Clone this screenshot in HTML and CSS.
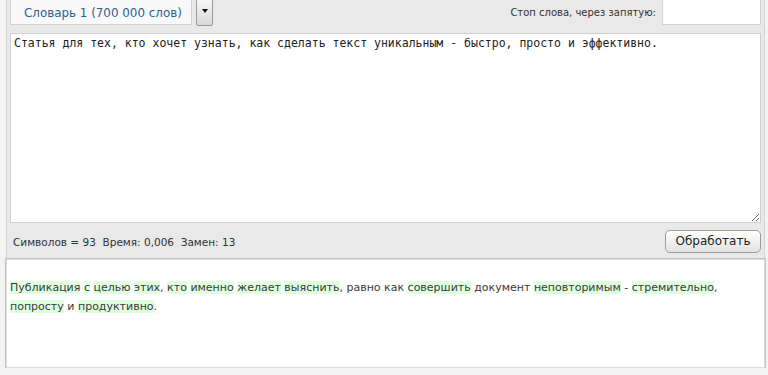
FILE: index.html
```html
<!DOCTYPE html>
<html lang="ru">
<head>
    <meta charset="utf-8">
    <meta name="viewport" content="width=device-width,initial-scale=1.0">
    <title>Синонимайзер</title>
    <link rel="stylesheet" href="styles.css">
</head>
<body>

    <div class="panel">
        <div class="top-bar">
            <div class="dict-select">
                <div class="dict-value">Словарь 1 (700 000 слов)</div>
                <button class="dict-arrow" type="button"><span class="tri"></span></button>
            </div>
            <div class="stop-words">
                <label for="stop">Стоп слова, через запятую:</label>
                <input id="stop" type="text">
            </div>
        </div>

        <textarea class="source" spellcheck="false">Статья для тех, кто хочет узнать, как сделать текст уникальным - быстро, просто и эффективно.</textarea>

        <div class="stats-bar">
            <div class="stats">Символов = 93&nbsp; Время: 0,006&nbsp; Замен: 13</div>
            <button class="run-button" type="button">Обработать</button>
        </div>
    </div>

    <div class="result">
        <p><span class="hl">Публикация</span> <span class="hl">с</span> <span class="hl">целью</span> <span class="hl">этих</span>, <span class="hl">кто</span> <span class="hl">именно</span> <span class="hl">желает</span> <span class="hl">выяснить</span>, равно как <span class="hl">совершить</span> документ <span class="hl">неповторимым</span> - <span class="hl">стремительно</span>, <span class="hl">попросту</span> и <span class="hl">продуктивно</span>.</p>
    </div>

</body>
</html>
```

FILE: styles.css
```css
html {
    background: #f3f3f3;
}

body {
    margin: 0;
    padding-top: 1px;
    font-family: "DejaVu Sans", Verdana, sans-serif;
    color: #333;
    overflow: hidden;
}

.panel {
    margin: -7px 0 0 6px;
    width: 759px;
    box-sizing: border-box;
    background: #e9e9e9;
    border-left: 1px solid #d4d4d4;
    border-right: 1px solid #d4d4d4;
    padding: 0 3px;
}

.top-bar {
    display: flex;
    justify-content: space-between;
    align-items: flex-start;
    height: 39px;
}

.dict-select {
    display: flex;
    gap: 4px;
}

.dict-value {
    width: 182px;
    height: 31px;
    line-height: 36px;
    box-sizing: border-box;
    padding-left: 13px;
    background: #f9f9f9;
    border: 1px solid #d2d2d2;
    color: #2d5f8f;
    font-size: 11.9px;
    white-space: nowrap;
}

.dict-arrow {
    width: 17px;
    height: 32px;
    padding: 0 0 12px 0;
    border: 1px solid #9a9a9a;
    border-radius: 0 0 2px 2px;
    background: linear-gradient(to bottom, #fdfdfd, #d8d8d8);
    display: flex;
    align-items: flex-end;
    justify-content: center;
    box-sizing: border-box;
}

.tri {
    width: 0;
    height: 0;
    border-left: 3px solid transparent;
    border-right: 3px solid transparent;
    border-top: 4px solid #111;
}

.stop-words {
    display: flex;
    align-items: center;
    gap: 6px;
    height: 31px;
}

.stop-words label {
    font-size: 10px;
    color: #333;
    padding-top: 6px;
}

.stop-words input {
    width: 99px;
    height: 31px;
    box-sizing: border-box;
    border: 1px solid #d2d2d2;
    background: #fff;
    margin: 0;
}

.source {
    display: block;
    width: 751px;
    height: 190px;
    box-sizing: border-box;
    margin: 0;
    border: 1px solid #cfcfcf;
    padding: 2px 3px;
    font-family: "DejaVu Sans Mono", monospace;
    font-size: 11.5px;
    line-height: 14px;
    color: #222;
    background: #fff;
    resize: both;
}

.stats-bar {
    display: flex;
    justify-content: space-between;
    align-items: center;
    height: 36px;
}

.stats {
    font-size: 10.5px;
    color: #333;
    padding-left: 3px;
    padding-top: 2px;
}

.run-button {
    width: 96px;
    height: 23px;
    border: 1px solid #9d9d9d;
    border-radius: 5px;
    background: linear-gradient(to bottom, #ffffff, #e2e2e2);
    font-family: "DejaVu Sans", Verdana, sans-serif;
    font-size: 12px;
    color: #222;
    cursor: pointer;
}

.result {
    margin: 0 0 0 6px;
    width: 759px;
    height: 109px;
    box-sizing: border-box;
    background: #fff;
    border: 1px solid #dcdcdc;
    box-shadow: 0 0 0 1px #c4c4c4;
    padding: 18px 3px 0 3px;
}

.result p {
    margin: 0;
    font-size: 11px;
    line-height: 19px;
    color: #3a3a3a;
}

.hl {
    background: #dfffdf;
}
```
